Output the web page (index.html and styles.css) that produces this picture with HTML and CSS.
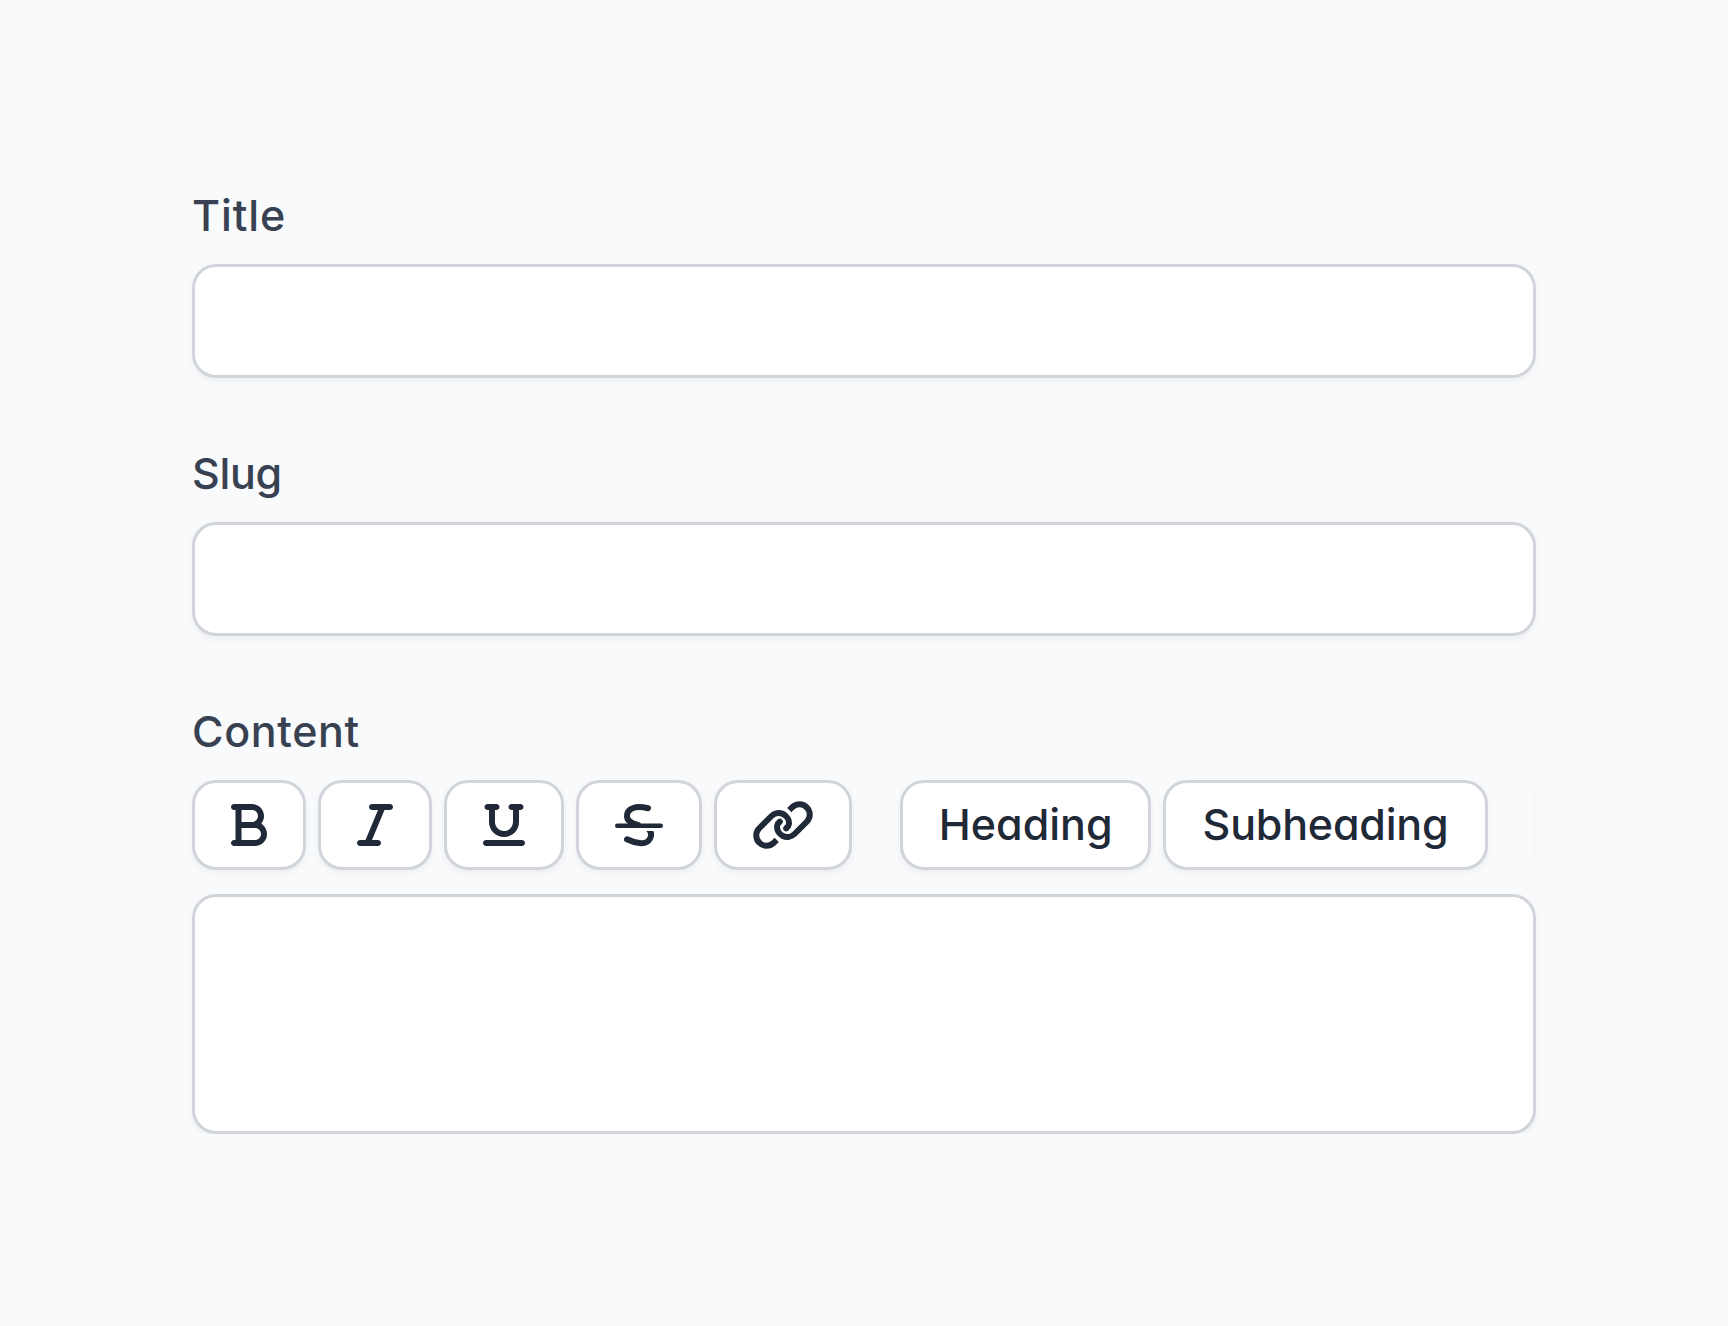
FILE: index.html
```
<!DOCTYPE html>
<html lang="en">
<head>
<meta charset="utf-8">
<title>Edit post</title>
<link rel="stylesheet" href="styles.css">
</head>
<body>
<form class="form">
  <div class="field">
    <label class="label label-title" for="title">Title</label>
    <input class="control input" id="title" type="text">
  </div>
  <div class="field">
    <label class="label label-slug" for="slug">Slug</label>
    <input class="control input" id="slug" type="text">
  </div>
  <div class="field">
    <label class="label label-content" for="content">Content</label>
    <div class="toolbar">
      <div class="group">
        <button class="control button" type="button" aria-label="Bold">
          <svg width="36" height="48" viewBox="0 0 384 512"><path fill="currentColor" d="M0 64C0 46.3 14.3 32 32 32H224c70.7 0 128 57.3 128 128c0 31.3-11.3 60.1-30 82.3c37.1 22.4 62 63.1 62 109.7c0 70.7-57.3 128-128 128H32c-17.7 0-32-14.3-32-32s14.3-32 32-32H48V96H32C14.3 96 0 81.7 0 64zM224 224c35.3 0 64-28.7 64-64s-28.7-64-64-64H112V224H224zM112 288V416H256c35.3 0 64-28.7 64-64s-28.7-64-64-64H112z"/></svg>
        </button>
        <button class="control button" type="button" aria-label="Italic">
          <svg width="36" height="48" viewBox="0 0 384 512"><path fill="currentColor" d="M128 64c0-17.7 14.3-32 32-32H352c17.7 0 32 14.3 32 32s-14.3 32-32 32H293.3L160 416h64c17.7 0 32 14.3 32 32s-14.3 32-32 32H32c-17.7 0-32-14.3-32-32s14.3-32 32-32H90.7L224 96H160c-17.7 0-32-14.3-32-32z"/></svg>
        </button>
        <button class="control button" type="button" aria-label="Underline">
          <svg width="42" height="48" viewBox="0 0 448 512"><path fill="currentColor" d="M16 64c0-17.7 14.3-32 32-32h96c17.7 0 32 14.3 32 32s-14.3 32-32 32H128V224c0 53 43 96 96 96s96-43 96-96V96H304c-17.7 0-32-14.3-32-32s14.3-32 32-32h96c17.7 0 32 14.3 32 32s-14.3 32-32 32H384V224c0 88.4-71.6 160-160 160s-160-71.6-160-160V96H48C30.3 96 16 81.7 16 64zM0 448c0-17.7 14.3-32 32-32H416c17.7 0 32 14.3 32 32s-14.3 32-32 32H32c-17.7 0-32-14.3-32-32z"/></svg>
        </button>
        <button class="control button" type="button" aria-label="Strikethrough">
          <svg width="48" height="48" viewBox="0 0 48 48" fill="none" stroke="currentColor" stroke-linecap="round"><path stroke-width="4.5" d="M2.25 24.75H45.75"/><path stroke-width="6" d="M33 7.2C28 6.1 22.600 5.400 18.200 7C14 8.500 11.800 11.500 12 15.500C12.200 19 14.500 20.800 18 22.200L23 24"/><path stroke-width="6" d="M12 38.300C15.500 40 20 41.600 24.500 42.100C31 42.700 35.500 39.500 36 34.500C36.050 34 36.050 33.500 36 33" /><path fill="currentColor" stroke="none" d="M31 29.900H38.300C39 31.300 39.200 32.800 39 34.500H33C33.300 32.300 32.600 31 31 29.900Z"/></svg>
        </button>
        <button class="control button" type="button" aria-label="Link">
          <svg width="60" height="48" viewBox="0 0 60 48" fill="none" stroke="currentColor" stroke-width="6"><path d="M36.300 9.200L39.500 6A10.260 10.260 0 0 1 54 20.500L41.500 33A10.260 10.260 0 0 1 24.050 24.800Q24.400 22.300 26.800 20.700"/><path d="M23.700 38.800L20.500 42A10.260 10.260 0 0 1 6 27.500L18.500 15A10.260 10.260 0 0 1 35.950 23.200Q35.600 25.700 33.200 27.300"/><path stroke-linecap="round" d="M26.700 20.800L26.800 20.700M33.300 27.200L33.200 27.300"/></svg>
        </button>
      </div>
      <div class="group">
        <button class="control button heading" type="button">Heading</button>
        <button class="control button subheading" type="button">Subheading</button>
      </div>
      <div class="edge"></div>
    </div>
    <textarea class="control textarea" id="content"></textarea>
  </div>
</form>
</body>
</html>
```
FILE: styles.css
```
* { box-sizing: border-box; }
body {
  margin: 0;
  background: #f9fafb;
  font-family: Inter, "Liberation Sans", sans-serif;
  font-size: 43px;
  font-weight: 500;
  font-feature-settings: "cv11";
}
.form {
  display: flex;
  flex-direction: column;
  gap: 65px;
  width: 1344px;
  margin: 185px auto 0;
}
.field { display: flex; flex-direction: column; }
.label {
  align-self: flex-start;
  height: 60px;
  margin-bottom: 19px;
  line-height: 60px;
  color: #374151;
}
.label-title { letter-spacing: 0.9px; }
.label-slug { letter-spacing: -0.3px; }
.label-content { letter-spacing: 0.65px; }
.control {
  border: 3px solid #d1d5db;
  border-radius: 24px;
  background: #fff;
  box-shadow: 0 3px 6px rgb(0 0 0 / 5%);
  font: inherit;
  font-feature-settings: inherit;
  outline: 0;
}
.input { width: 100%; height: 114px; }
.textarea {
  display: block;
  width: 100%;
  height: 240px;
  resize: none;
}
.toolbar { display: flex; gap: 45px; margin-bottom: 24px; }
.group { display: flex; gap: 12px; }
.group + .group { margin-left: 3px; }
.button {
  display: flex;
  align-items: center;
  justify-content: center;
  height: 90px;
  padding: 0 36px;
  color: #1f2937;
  white-space: nowrap;
}
.button svg { display: block; flex: none; overflow: visible; }
.heading { width: 250.5px; padding: 0 0 2px 1px; }
.subheading { width: 325px; padding: 0 0 2px 1px; letter-spacing: -0.2px; }
.edge {
  width: 3px;
  height: 66px;
  margin-top: 12px;
  background: #f5f6f8;
}
```
